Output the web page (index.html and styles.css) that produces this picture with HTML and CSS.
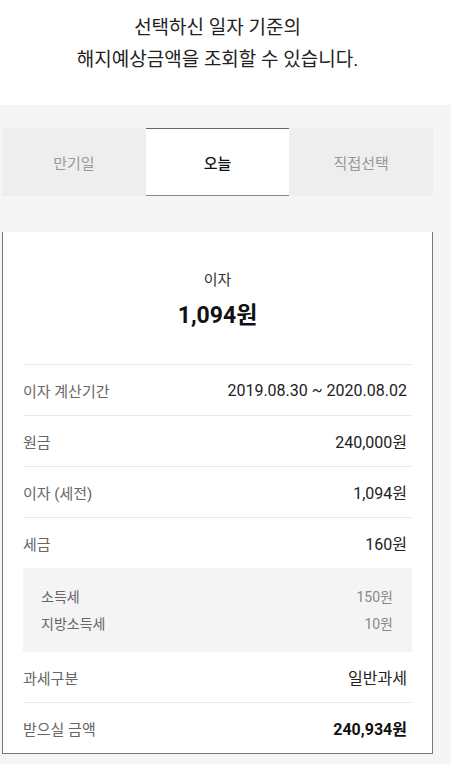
FILE: index.html
```html
<!DOCTYPE html>
<html lang="ko">
<head>
    <meta charset="UTF-8">
    <meta name="viewport" content="width=device-width, initial-scale=1.0">
    <title>해지예상금액 조회</title>
    <link rel="stylesheet" href="styles.css">
</head>
<body>
    <header class="intro">
        <p>선택하신 일자 기준의<br>해지예상금액을 조회할 수 있습니다.</p>
    </header>

    <section class="panel">
        <ul class="tabs">
            <li class="tab">만기일</li>
            <li class="tab active">오늘</li>
            <li class="tab">직접선택</li>
        </ul>

        <div class="card">
            <div class="summary">
                <p class="summary-label">이자</p>
                <p class="summary-value">1,094원</p>
            </div>

            <div class="row">
                <span class="label">이자 계산기간</span>
                <span class="value">2019.08.30 ~ 2020.08.02</span>
            </div>
            <div class="row">
                <span class="label">원금</span>
                <span class="value">240,000원</span>
            </div>
            <div class="row">
                <span class="label">이자 (세전)</span>
                <span class="value">1,094원</span>
            </div>
            <div class="row no-line">
                <span class="label">세금</span>
                <span class="value">160원</span>
            </div>
            <div class="tax-box">
                <div class="sub-row">
                    <span>소득세</span>
                    <span class="sub-value">150원</span>
                </div>
                <div class="sub-row">
                    <span>지방소득세</span>
                    <span class="sub-value">10원</span>
                </div>
            </div>
            <div class="row">
                <span class="label">과세구분</span>
                <span class="value">일반과세</span>
            </div>
            <div class="row no-line">
                <span class="label">받으실 금액</span>
                <span class="value strong">240,934원</span>
            </div>
        </div>
    </section>
</body>
</html>
```

FILE: styles.css
```css
body {
    margin: 0;
    padding: 0;
    background-color: #f5f5f5;
    font-family: Roboto, "Noto Sans CJK KR", sans-serif;
    color: #222;
}
p {
    margin: 0;
}
.intro {
    background-color: #fff;
    text-align: center;
    padding: 12px 16px 29px 0;
    font-size: 19px;
    line-height: 32px;
    color: #222;
}
.panel {
    padding: 23px 18px 11px 2px;
}
.tabs {
    list-style: none;
    margin: 0;
    padding: 0;
    display: flex;
    background-color: #eeeeee;
    height: 68px;
}
.tab {
    flex: 1;
    display: flex;
    align-items: center;
    justify-content: center;
    font-size: 15px;
    color: #999;
}
.tab.active {
    background-color: #fff;
    color: #111;
    font-weight: 500;
    border-top: 1px solid #666;
    border-bottom: 1px solid #888;
}
.card {
    margin-top: 36px;
    background-color: #fff;
    border: 1px solid #777;
    border-top: none;
    padding: 0 20px;
}
.summary {
    text-align: center;
    padding: 37px 0 32px;
    border-bottom: 1px solid #e8e8e8;
}
.summary-label {
    font-size: 15px;
    line-height: 22px;
    color: #333;
}
.summary-value {
    margin-top: 9px;
    font-size: 23px;
    line-height: 32px;
    font-weight: 700;
    color: #111;
}
.row {
    display: flex;
    justify-content: space-between;
    align-items: center;
    height: 50px;
    padding-right: 5px;
    border-bottom: 1px solid #e8e8e8;
    font-size: 15px;
}
.row.no-line {
    border-bottom: none;
}
.label {
    color: #666;
}
.value {
    font-size: 16px;
    color: #222;
}
.value.strong {
    font-weight: 700;
    color: #111;
}
.tax-box {
    background-color: #f4f4f4;
    padding: 16px 19px 14px 18px;
}
.sub-row {
    display: flex;
    justify-content: space-between;
    font-size: 14px;
    line-height: 27px;
    color: #666;
}
.sub-value {
    color: #888;
}
```
